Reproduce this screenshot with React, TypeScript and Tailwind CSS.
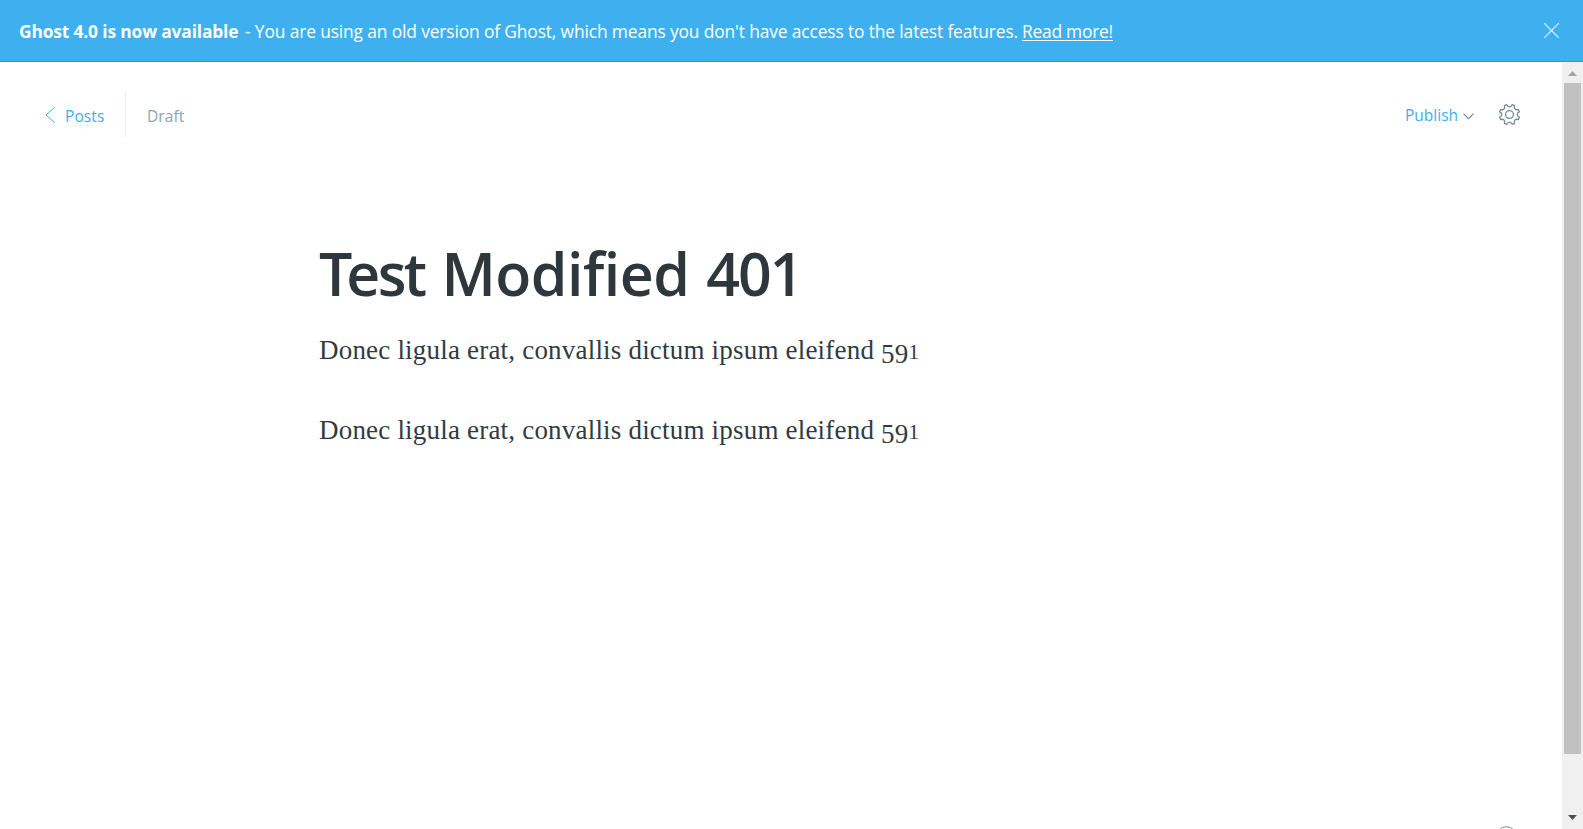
import React from "react";

function Figures() {
  return (
    <span className="inline-flex items-baseline tracking-[0.2px]">
      <span className="relative top-1">5</span>
      <span className="relative top-1">9</span>
      <span className="text-[21px]">1</span>
    </span>
  );
}

function Paragraph() {
  return (
    <p className="h-20 whitespace-nowrap font-['Liberation_Serif',serif] text-[27px] leading-[42px] tracking-[0.2px] text-[#313b3f]">
      Donec ligula erat, convallis dictum ipsum eleifend <Figures />
    </p>
  );
}

function Banner() {
  return (
    <div className="flex h-[62px] shrink-0 items-center justify-between border-b border-[#1f9be4] bg-[#3eb0ef] pr-6 pl-[19px] text-[17.4px] leading-6 text-white">
      <p className="flex pt-px whitespace-nowrap">
        <strong className="w-[225px] font-bold tracking-[-0.16px]">Ghost 4.0 is now available</strong>
        <span className="w-[778px] pl-px tracking-[-0.14px]">- You are using an old version of Ghost, which means you don't have access to the latest features.</span>
        <a href="#more" className="tracking-[-0.24px] underline underline-offset-2">Read more!</a>
      </p>
      <svg className="size-[15px]" viewBox="0 0 15 15" fill="none" stroke="currentColor" strokeWidth="1.1">
        <path d="M.4.4l14.2 14.2M14.6.4L.4 14.6" />
      </svg>
    </div>
  );
}

const polar = (deg: number, r: number) => {
  const a = (deg * Math.PI) / 180;
  return `${(10.5 + r * Math.sin(a)).toFixed(2)} ${(10.5 - r * Math.cos(a)).toFixed(2)}`;
};

// Eight teeth centred between the compass points, with round notches on them.
const gearPath =
  Array.from({ length: 8 }, (_, i) => {
    const notch = i * 45;
    return `${i ? "L" : "M"}${polar(notch - 15, 10.2)}C${polar(notch - 11, 7.1)} ${polar(notch + 11, 7.1)} ${polar(notch + 15, 10.2)}`;
  }).join("") + "Z";

function Gear() {
  return (
    <svg className="size-[21px] overflow-visible" viewBox="0 0 21 21" fill="none" stroke="#738a94" strokeWidth="1.25" strokeLinejoin="round">
      <circle cx="10.5" cy="10.5" r="3.9" />
      <path d={gearPath} />
    </svg>
  );
}

function Header() {
  return (
    <header className="flex h-[105px] items-center justify-between pr-[42px] pl-[45px] text-[16px] leading-6">
      <div className="flex items-center">
        <a href="#posts" className="flex h-[45px] w-20 items-center text-[#3eb0ef]">
          <svg className="h-4 w-[10px]" viewBox="0 0 10 16" fill="none" stroke="currentColor">
            <path d="M9.5.5L1 8l8.5 7.5" />
          </svg>
          <span className="ml-[10px] pt-[2px] text-[15.5px] tracking-[0.1px]">Posts</span>
        </a>
        <span className="flex h-[45px] items-center border-l border-[#e5eff5] pt-[2px] pl-[21px] text-[15.5px] tracking-[0.1px] text-[#8fa3ad]">Draft</span>
      </div>
      <div className="flex items-center">
        <button className="flex items-center text-[#3eb0ef]">
          <span className="w-[58px] text-left text-[15.5px]">Publish</span>
          <svg className="mt-[3px] h-[7px] w-[11px]" viewBox="0 0 11 7" fill="none" stroke="#738a94" strokeWidth="1.1">
            <path d="M.5.7l5 5 5-5" />
          </svg>
        </button>
        <button className="ml-[25px]"><Gear /></button>
      </div>
    </header>
  );
}

function Scrollbar() {
  return (
    <div className="flex w-[21px] shrink-0 flex-col items-center bg-[#f0f0f0]">
      <svg className="h-[21px] w-[21px]" viewBox="0 0 21 21" fill="#a3a3a3"><path d="M6 14l4.5-5 4.5 5z" /></svg>
      <div className="h-[671px] w-[17px] bg-[#c1c1c1]" />
      <svg className="mt-auto h-[21px] w-[21px]" viewBox="0 0 21 21" fill="#505050"><path d="M6 7l4.5 5 4.5-5z" /></svg>
    </div>
  );
}

export default function App() {
  return (
    <div className="flex h-[829px] w-[1583px] flex-col overflow-hidden bg-white font-['Open_Sans',sans-serif]">
      <Banner />
      <div className="flex min-h-0 flex-1">
        <div className="flex min-w-0 flex-1 flex-col overflow-hidden">
          <Header />
          <main className="flex-1 pt-[66px] pl-[319px]">
            <h1 className="h-24 whitespace-nowrap text-[59px] leading-[80px] font-semibold tracking-[-0.5px] text-[#2e383c]">
              <span className="tracking-[-6px]">T</span><span className="mr-[2px] tracking-[-2.6px]">est</span> Modified <span className="ml-[2px] tracking-[-2px]">401</span>
            </h1>
            <Paragraph />
            <Paragraph />
          </main>
          <div className="flex h-[3px] shrink-0 justify-end pr-[45px]">
            <svg className="h-[3px] w-[21px]" viewBox="0 0 21 3" fill="none" stroke="#738a94"><circle cx="10.5" cy="10.5" r="9.8" /></svg>
          </div>
        </div>
        <Scrollbar />
      </div>
    </div>
  );
}
